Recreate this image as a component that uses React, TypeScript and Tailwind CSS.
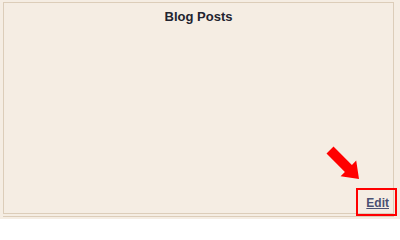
export default function App() {
  return (
    <div
      className="relative h-[219px] w-[400px] overflow-hidden bg-[#f5ede3] pl-[3px] pr-[6px] pt-[2px]"
      style={{ fontFamily: '"Liberation Sans", Arial, sans-serif' }}
    >
      <div className="flex h-[212px] flex-col justify-between border border-[#dccdb9]">
        <h2 className="pt-[6px] text-center text-[13px] font-bold leading-[15px] text-[#22232f]">
          Blog Posts
        </h2>
        <div className="flex justify-end pb-[3px] pr-[4px]">
          <span className="relative block text-[12px] font-bold leading-[14px]">
            <a href="#" className="text-[#4b5172] underline">
              Edit
            </a>
            {/* highlight annotation */}
            <span className="pointer-events-none absolute -bottom-[6px] -left-[10px] -right-[8px] -top-[8px] border-2 border-[#ff0000]" />
          </span>
        </div>
      </div>
      <div className="mt-[2px] h-px w-full bg-[#dccdb9]" />

      <svg
        className="pointer-events-none absolute left-0 top-0"
        width="400"
        height="219"
        viewBox="0 0 400 219"
      >
        <polygon
          fill="#ff0000"
          points="333.5,146.5 351.9,164.9 356.2,160.6 359,179 340.6,176.2 344.9,171.9 326.5,153.5"
        />
      </svg>
    </div>
  );
}
